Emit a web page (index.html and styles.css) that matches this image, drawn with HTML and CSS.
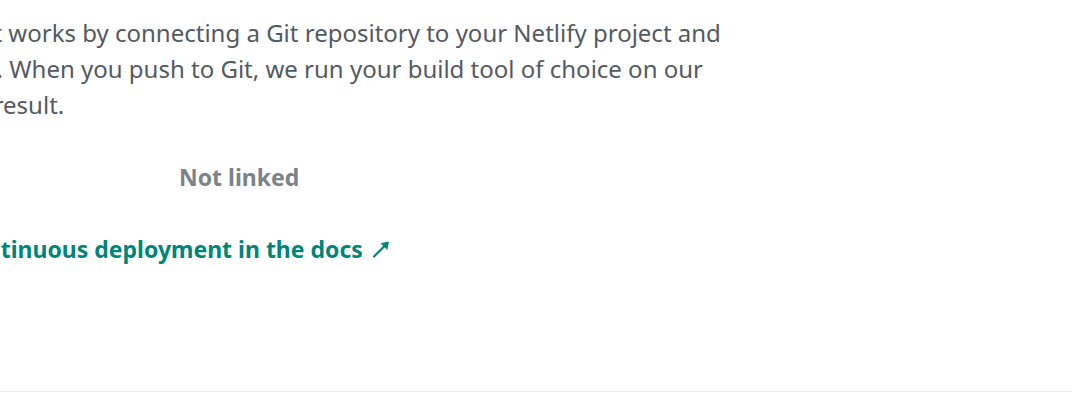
FILE: index.html
```html
<!DOCTYPE html>
<html lang="en">
<head>
<meta charset="utf-8">
<title>Continuous deployment</title>
<link rel="stylesheet" href="styles.css">
</head>
<body>
<main class="panel">
  <section class="content">
    <p class="desc">Continuous deployment works by connecting a Git repository to your Netlify project and keeping the two in sync. When you push to Git, we run your build tool of choice on our servers and deploy the result.</p>
    <dl class="meta">
      <dt class="meta-label">Repository</dt>
      <dd class="meta-value">Not linked</dd>
    </dl>
    <a class="docs-link" href="#">Learn more about continuous deployment in the docs <svg class="arrow" viewBox="0 0 18 18" width="18" height="18" aria-hidden="true"><path class="arrow-line" d="M2 16.5 L13 5.5" /><path class="arrow-head" d="M17 1.5 L8.5 3.2 L15.3 10 Z" /></svg></a>
  </section>
</main>
<hr class="divider">
</body>
</html>
```
FILE: styles.css
```css
html, body {
  margin: 0;
  padding: 0;
  background: #ffffff;
  overflow: hidden;
}
body {
  width: 1075px;
  height: 408px;
  font-family: "Noto Sans", "Open Sans", sans-serif;
  font-size: 24px;
  line-height: 36px;
  color: #545a61;
}
.panel {
  height: 376px;
  overflow: hidden;
}
.content {
  margin-left: -269px;
  padding-top: 15px;
}
.desc {
  margin: 0;
  width: 1000px;
}
.meta {
  margin: 36px 0 0;
  display: grid;
  grid-template-columns: 448px auto;
  font-size: 23px;
}
.meta-label {
  font-weight: 700;
  color: #545a61;
}
.meta-value {
  margin: 0;
  font-weight: 700;
  color: #7a828a;
}
.docs-link {
  display: inline-flex;
  align-items: center;
  gap: 9px;
  margin-top: 36px;
  margin-left: 17px;
  font-size: 23px;
  font-weight: 700;
  color: #00857a;
  text-decoration: none;
}
.arrow {
  overflow: visible;
}
.arrow-line {
  fill: none;
  stroke: currentColor;
  stroke-width: 2.2;
  stroke-linecap: round;
}
.arrow-head {
  fill: currentColor;
}
.divider {
  margin: 15px 3px 0 1px;
  border: 0;
  border-top: 1px solid #e9ebed;
  height: 0;
}
```
